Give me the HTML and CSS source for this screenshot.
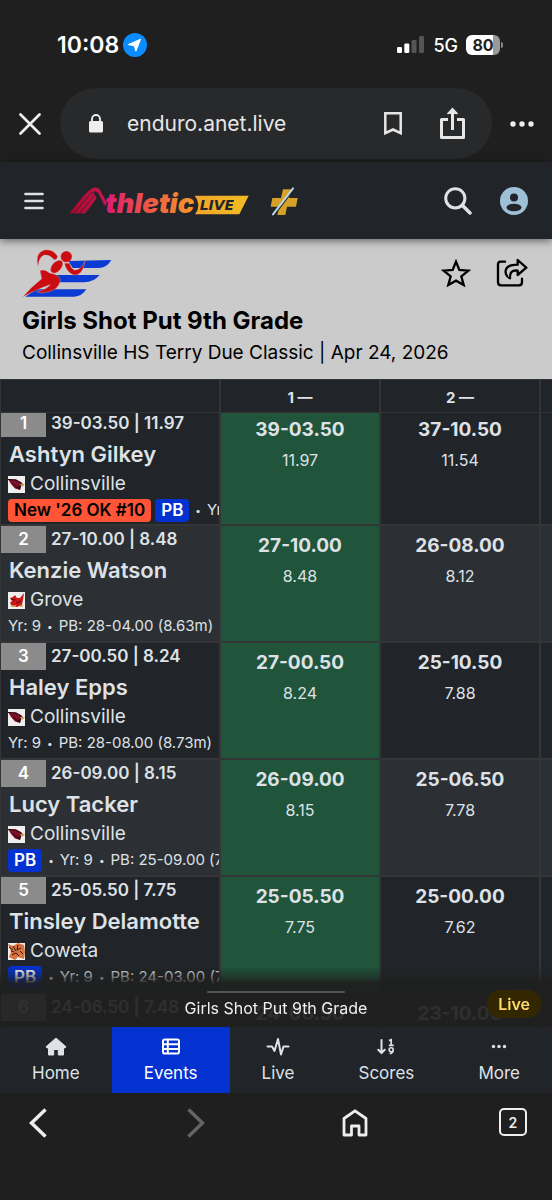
FILE: index.html
```html
<!DOCTYPE html>
<html lang="en">
<head>
<meta charset="utf-8">
<meta name="viewport" content="width=device-width, initial-scale=1">
<title>Girls Shot Put 9th Grade</title>
<link rel="stylesheet" href="styles.css">
</head>
<body>
<svg class="defs" aria-hidden="true">
  <symbol id="cardinal" viewBox="0 0 17 17">
    <rect width="17" height="17" fill="#f1eeee"/>
    <path d="M0 3 L8 3.500 L13 6 L16 9 L13 10 L12 14 L7 12.500 L3 8 Z" fill="#7d1029"/>
    <path d="M0 3.500 L8 4 L13 7 M5 8 L11 13" stroke="#25070d" stroke-width="1" fill="none"/>
    <path d="M12 8 L17 8 L14 11 Z" fill="#c9a14a"/>
    <path d="M9 11 L13 10 L12 14 Z" fill="#26090f"/>
  </symbol>
  <symbol id="redbird" viewBox="0 0 17 17">
    <rect width="17" height="17" fill="#f1eeee"/>
    <path d="M2 6 L5 5 L7 3 L9 6 L12 6 L16 1 L15 8 L14 13 L9 15 L4 14 L2 11 L4 9 Z" fill="#c81818"/>
    <path d="M3 7 L7 8 M8 11 L13 9" stroke="#5e0808" fill="none"/>
    <path d="M3 14 H8 M12 14 H15" stroke="#c9a14a" stroke-width="1.5"/>
  </symbol>
  <symbol id="tiger" viewBox="0 0 17 17">
    <rect width="17" height="17" fill="#f1eeee"/>
    <path d="M0 1 L5 3 L10 0 L16 2 L17 9 L16 16 L10 14 L7 17 L1 14 L3 9 Z" fill="#d9723c"/>
    <path d="M1 4 L5 7 M5 3 L8 8 M10 2 L9 7 L13 5 M4 12 L8 10 L11 13 M12 8 L15 11 M6 9 L3 8" stroke="#2b1712" stroke-width="1" fill="none"/>
  </symbol>
</svg>

<div class="status-bar">
  <div class="status-group">
    <span class="clock">10:08</span>
    <svg width="24" height="24" viewBox="0 0 24 24" aria-hidden="true"><circle cx="12" cy="12" r="12" fill="#0a8cff"/><path d="M17.6 6.2 L12.9 18.2 L11.3 12.7 L5.2 11.6 Z" fill="#fff" stroke="#fff" stroke-width="1" stroke-linejoin="round"/></svg>
  </div>
  <div class="status-group status-right">
    <svg width="28" height="18" viewBox="0 0 28 18" aria-hidden="true"><rect x="0" y="11" width="5" height="6" rx="1.3" fill="#fff"/><rect x="7.3" y="7.500" width="5" height="9.500" rx="1.3" fill="#fff"/><rect x="14.6" y="4" width="5" height="13" rx="1.3" fill="#555"/><rect x="22" y="0" width="5" height="17" rx="1.3" fill="#555"/></svg>
    <span class="network">5G</span>
    <span class="battery">80</span>
  </div>
</div>

<div class="browser-bar">
  <button class="icon-button side" aria-label="Close"><svg width="22" height="22" viewBox="0 0 22 22"><path d="M1.500 1.500 L20.500 20.500 M20.500 1.500 L1.500 20.500" stroke="#eee" stroke-width="2.700" stroke-linecap="round"/></svg></button>
  <div class="address">
    <svg width="14" height="19" viewBox="0 0 14 19" aria-hidden="true"><rect y="7" width="14" height="11.500" rx="1.500" fill="#eee"/><path d="M3 8 V5 A4 4 0 0 1 11 5 V8" fill="none" stroke="#eee" stroke-width="1.8"/></svg>
    <span class="url">enduro.anet.live</span>
    <button class="icon-button" aria-label="Bookmark"><svg width="18" height="23" viewBox="0 0 18 23"><path d="M1.300 1.300 H16.700 V21.200 L9 17.500 L1.300 21.200 Z" fill="none" stroke="#e6e6e6" stroke-width="2.500"/></svg></button>
    <button class="icon-button share" aria-label="Share"><svg width="25" height="33" viewBox="0 0 25 33"><path d="M8 12.500 H1.500 V30.500 H23.500 V12.500 H17 M12.500 23 V3" fill="none" stroke="#e6e6e6" stroke-width="3" stroke-linejoin="round"/><path d="M7.500 7 L12.500 1.500 L17.500 7" fill="#e6e6e6" stroke="#e6e6e6" stroke-width="1.500"/></svg></button>
  </div>
  <button class="icon-button side" aria-label="Menu"><svg width="24" height="6" viewBox="0 0 24 6"><g fill="#eee"><circle cx="3" cy="3" r="2.700"/><circle cx="12" cy="3" r="2.700"/><circle cx="21" cy="3" r="2.700"/></g></svg></button>
</div>

<header class="site-header">
  <button class="icon-button" aria-label="Open navigation"><svg width="20" height="18" viewBox="0 0 20 18"><path d="M1.500 2 H18.500 M1.500 9 H18.500 M1.500 16 H18.500" stroke="#dee2e6" stroke-width="2.700" stroke-linecap="round"/></svg></button>
  <a class="logo" href="#home" aria-label="Athletic Live">
    <svg width="182" height="30" viewBox="204 47 546 90">
      <defs>
        <linearGradient id="word" gradientUnits="userSpaceOnUse" x1="320" x2="585" y1="0" y2="0"><stop offset="0" stop-color="#dd1b70"/><stop offset=".5" stop-color="#ee5a45"/><stop offset="1" stop-color="#f49b28"/></linearGradient>
        <linearGradient id="mark" gradientUnits="userSpaceOnUse" x1="210" x2="320" y1="0" y2="0"><stop offset="0" stop-color="#a3092d"/><stop offset="1" stop-color="#cb1650"/></linearGradient>
        <linearGradient id="flag" gradientUnits="userSpaceOnUse" x1="585" x2="745" y1="0" y2="0"><stop offset="0" stop-color="#f0a52c"/><stop offset="1" stop-color="#f2bc22"/></linearGradient>
      </defs>
      <path d="M209 129 Q246 78 270 58 Q287 46 299 57 L321 98 L313 108 L294 69 Q286 61 276 70 L256 129 Z" fill="url(#mark)"/>
      <path d="M256 129 L290 84 L280 66 L226 129 Z" fill="url(#mark)"/>
      <path d="M260 129 L291 84 L312 110 L330 129 Z" fill="#212529"/>
      <path d="M222 129 L272 70 Q286 58 294 70 L315 107 M239 129 L284 75" fill="none" stroke="#212529" stroke-width="2"/>
      <text class="logo-word" x="316" y="128" fill="url(#word)">thletic</text>
      <path d="M584 76 H746 L718 132 H585 Q606 104 584 76 Z" fill="url(#flag)"/>
      <text class="logo-live" x="599" y="120">LIVE</text>
    </svg>
  </a>
  <button class="icon-button plus" aria-label="Plus"><svg width="30" height="30" viewBox="807 50 90 90"><path d="M849 60 H873 L867 86 H893 L888 112 H861 L856 137 H832 L838 112 H812 L817 86 H843 Z" fill="#d6a126"/><path d="M881 60 L824 135" stroke="#212529" stroke-width="5"/><path d="M879 57 L819 135" stroke="#b9d7ea" stroke-width="6" stroke-linecap="round"/></svg></button>
  <button class="icon-button search" aria-label="Search"><svg width="28" height="28" viewBox="0 0 28 28"><circle cx="11.300" cy="11.300" r="9.600" fill="none" stroke="#dee2e6" stroke-width="3"/><path d="M18.500 18.500 L26 26" stroke="#dee2e6" stroke-width="3.500" stroke-linecap="round"/></svg></button>
  <button class="icon-button" aria-label="Account"><svg width="28" height="28" viewBox="0 0 28 28"><circle cx="14" cy="14" r="14" fill="#9ec0d6"/><circle cx="14" cy="10.500" r="4" fill="#212529"/><ellipse cx="14" cy="20.500" rx="7.500" ry="3.800" fill="#212529"/></svg></button>
</header>

<section class="event">
  <div class="event-top">
    <svg width="90" height="48" viewBox="66 27 270 144" role="img" aria-label="Meet logo">
      <g fill="#0b3bd3"><path d="M205 63 L334 60 Q320 84 296 84 L218 84 Z"/><path d="M160 105 H299 Q281 127 252 127 H178 Z"/><path d="M108 148 H259 Q246 169 222 170 H76 Z"/></g>
      <g fill="#cb0d12" stroke="#cbcbcb" stroke-width="1"><circle cx="199" cy="50" r="17"/><ellipse cx="170" cy="80" rx="23" ry="14" transform="rotate(-48 170 80)"/><path d="M114 80 Q104 38 133 30 Q159 26 173 49 Q171 61 162 59 Q150 43 133 45 Q117 50 114 80 Z"/><path d="M193 70 Q199 97 222 106 Q251 103 255 62 Q243 91 223 90 Q213 85 209 70 Z"/><path d="M120 92 Q132 85 149 99 Q178 103 181 121 Q176 156 124 159 L110 155 Q138 149 151 134 Q115 145 68 171 Q92 142 125 116 Z"/></g>
    </svg>
    <button class="icon-button star" aria-label="Favorite"><svg width="30" height="28" viewBox="366 268 88 84"><path d="M410 276 L420 301 L447 303 L426 320 L433 346 L410 333 L387 346 L394 320 L373 303 L400 301 Z" fill="none" stroke="#000" stroke-width="7"/></svg></button>
    <button class="icon-button" aria-label="Share event"><svg width="32" height="30" viewBox="529 265 96 90"><path d="M556 276 H543 Q535 276 535 284 V338 Q535 347 544 347 H598 Q607 347 607 338 V327" fill="none" stroke="#000" stroke-width="7" stroke-linecap="round"/><path d="M594 271 L620 294 L594 316 V303 Q569 299 571 326 Q556 318 558 303 Q561 285 594 285 Z" fill="none" stroke="#000" stroke-width="7" stroke-linejoin="round"/></svg></button>
  </div>
  <h1>Girls Shot Put 9th Grade</h1>
  <p>Collinsville HS Terry Due Classic | Apr 24, 2026</p>
</section>

<main class="board">
  <table class="results">
    <colgroup><col class="col-athlete"><col class="col-attempt"><col class="col-attempt"><col class="col-attempt"></colgroup>
    <thead><tr><th aria-label="Athlete"></th><th>1 —</th><th>2 —</th><th></th></tr></thead>
    <tbody>
      <tr>
        <td><div class="athlete"><div class="summary"><span class="rank">1</span>39-03.50 | 11.97</div><div class="name">Ashtyn Gilkey</div><div class="team"><svg width="17" height="17"><use href="#cardinal"/></svg>Collinsville</div><div class="meta"><span class="badge record">New '26 OK #10</span><span class="badge">PB</span><span class="dot">•</span>Yr: 9<span class="dot">•</span>PB: 39-03.50 (11.97m)</div></div></td>
        <td class="best"><div class="mark"><b>39-03.50</b><span>11.97</span></div></td><td><div class="mark"><b>37-10.50</b><span>11.54</span></div></td><td></td>
      </tr>
      <tr>
        <td><div class="athlete"><div class="summary"><span class="rank">2</span>27-10.00 | 8.48</div><div class="name">Kenzie Watson</div><div class="team"><svg width="17" height="17"><use href="#redbird"/></svg>Grove</div><div class="meta">Yr: 9<span class="dot">•</span>PB: 28-04.00 (8.63m)</div></div></td>
        <td class="best"><div class="mark"><b>27-10.00</b><span>8.48</span></div></td><td><div class="mark"><b>26-08.00</b><span>8.12</span></div></td><td></td>
      </tr>
      <tr>
        <td><div class="athlete"><div class="summary"><span class="rank">3</span>27-00.50 | 8.24</div><div class="name">Haley Epps</div><div class="team"><svg width="17" height="17"><use href="#cardinal"/></svg>Collinsville</div><div class="meta">Yr: 9<span class="dot">•</span>PB: 28-08.00 (8.73m)</div></div></td>
        <td class="best"><div class="mark"><b>27-00.50</b><span>8.24</span></div></td><td><div class="mark"><b>25-10.50</b><span>7.88</span></div></td><td></td>
      </tr>
      <tr>
        <td><div class="athlete"><div class="summary"><span class="rank">4</span>26-09.00 | 8.15</div><div class="name">Lucy Tacker</div><div class="team"><svg width="17" height="17"><use href="#cardinal"/></svg>Collinsville</div><div class="meta"><span class="badge">PB</span><span class="dot">•</span>Yr: 9<span class="dot">•</span>PB: 25-09.00 (7.84m)</div></div></td>
        <td class="best"><div class="mark"><b>26-09.00</b><span>8.15</span></div></td><td><div class="mark"><b>25-06.50</b><span>7.78</span></div></td><td></td>
      </tr>
      <tr>
        <td><div class="athlete"><div class="summary"><span class="rank">5</span>25-05.50 | 7.75</div><div class="name">Tinsley Delamotte</div><div class="team"><svg width="17" height="17"><use href="#tiger"/></svg>Coweta</div><div class="meta"><span class="badge">PB</span><span class="dot">•</span>Yr: 9<span class="dot">•</span>PB: 24-03.00 (7.39m)</div></div></td>
        <td class="best"><div class="mark"><b>25-05.50</b><span>7.75</span></div></td><td><div class="mark"><b>25-00.00</b><span>7.62</span></div></td><td></td>
      </tr>
      <tr>
        <td><div class="athlete"><div class="summary"><span class="rank">6</span>24-06.50 | 7.48</div></div></td>
        <td><div class="mark"><b>24-06.50</b></div></td><td><div class="mark"><b>23-10.00</b></div></td><td></td>
      </tr>
    </tbody>
  </table>
  <div class="sheet">
    <span class="handle"></span>
    <span class="sheet-title">Girls Shot Put 9th Grade</span>
    <button class="live">Live</button>
  </div>
</main>

<nav class="tabs">
  <a href="#home"><svg width="22" height="20" viewBox="0 0 22 20"><path d="M11 1 L21 9.800 L19.800 11 H18.500 V18 H13.300 V12.500 H8.700 V18 H3.500 V11 H2.200 L1 9.800 Z" fill="#dee2e6" stroke="#dee2e6" stroke-linejoin="round"/></svg>Home</a>
  <a href="#events" class="active"><svg width="20" height="20" viewBox="0 0 20 20"><rect x="2" y="2.500" width="16" height="14" rx="1.800" fill="none" stroke="#fff" stroke-width="2"/><path d="M2 7.200 H18 M2 12 H18 M6.800 3 V16" stroke="#fff" stroke-width="2"/></svg>Events</a>
  <a href="#live"><svg width="24" height="20" viewBox="0 0 24 20"><path d="M1.500 9.500 H6 L8.500 14 L12 2 L15 17.500 L17.500 9.500 H22.500" fill="none" stroke="#dee2e6" stroke-width="2" stroke-linejoin="round" stroke-linecap="round"/></svg>Live</a>
  <a href="#scores"><svg width="18" height="20" viewBox="0 0 18 20"><path d="M4.500 3 V16 M1.300 12.800 L4.500 16 L7.700 12.800" fill="none" stroke="#dee2e6" stroke-width="2" stroke-linecap="round"/><path d="M12 3.600 L14.200 2.800 V8 M11.800 8.300 H16.800 M16 13.500 Q16 16 12.800 16.800" fill="none" stroke="#dee2e6" stroke-width="1.700"/><circle cx="14.200" cy="12.800" r="2" fill="none" stroke="#dee2e6" stroke-width="1.600"/></svg>Scores</a>
  <a href="#more"><svg width="16" height="20" viewBox="0 0 16 20"><g fill="#dee2e6"><circle cx="2.500" cy="9.500" r="1.700"/><circle cx="8" cy="9.500" r="1.700"/><circle cx="13.500" cy="9.500" r="1.700"/></g></svg>More</a>
</nav>

<footer class="browser-tools">
  <button class="icon-button" aria-label="Back"><svg width="18" height="30" viewBox="0 0 18 30"><path d="M16.500 1.500 L2.500 15 L16.500 28.500" fill="none" stroke="#eee" stroke-width="3.500"/></svg></button>
  <button class="icon-button" aria-label="Forward"><svg width="18" height="30" viewBox="0 0 18 30"><path d="M1.500 1.500 L15.500 15 L1.500 28.500" fill="none" stroke="#656565" stroke-width="3.500"/></svg></button>
  <button class="icon-button" aria-label="Home page"><svg width="26" height="28" viewBox="0 0 26 28"><path d="M2 26 V9.500 L13 1.800 L24 9.500 V26 H17 V17 H9.500 V26 Z" fill="none" stroke="#eee" stroke-width="2.800" stroke-linejoin="round"/></svg></button>
  <button class="tab-count" aria-label="2 open tabs">2</button>
</footer>
</body>
</html>
```
FILE: styles.css
```css
* { box-sizing: border-box; }

body {
  margin: 0;
  height: 100vh;
  display: flex;
  flex-direction: column;
  overflow: hidden;
  background: #1f1f1f;
  color: #dee2e6;
  font-family: Inter, "Liberation Sans", sans-serif;
}

svg { display: block; flex: none; }
a { color: inherit; text-decoration: none; }

button {
  border: 0;
  padding: 0;
  background: none;
  color: inherit;
  font: inherit;
  cursor: pointer;
}

.defs { position: absolute; width: 0; height: 0; }
.icon-button { display: flex; align-items: center; justify-content: center; flex: none; }

/* Phone status bar */
.status-bar {
  height: 88px;
  flex: none;
  display: flex;
  align-items: center;
  justify-content: space-between;
  padding: 2px 52px 0 57px;
  color: #fff;
}
.status-group { display: flex; align-items: center; gap: 4px; }
.status-right { gap: 8px; }
.clock { font-size: 23px; font-weight: 600; }
.network { font-size: 18px; font-weight: 500; }
.battery {
  position: relative;
  width: 34px;
  height: 20px;
  border-radius: 6px;
  background: linear-gradient(90deg, #fff 80%, #999 80%);
  color: #1f1f1f;
  font-size: 16px;
  font-weight: 700;
  line-height: 20px;
  text-align: center;
}
.battery::after {
  content: "";
  position: absolute;
  right: -3px;
  top: 7px;
  width: 2px;
  height: 6px;
  border-radius: 0 2px 2px 0;
  background: #888;
}

/* Browser address bar */
.browser-bar { flex: none; display: flex; padding-bottom: 3px; }
.side { width: 60px; }
.address {
  flex: 1;
  height: 71px;
  display: flex;
  align-items: center;
  padding: 0 27px 0 29px;
  border-radius: 36px;
  background: #28292a;
}
.url { flex: 1; margin-left: 24px; font-size: 21px; color: #e6e6e6; }
.share { margin-left: 38px; }

/* Site header */
.site-header {
  position: relative;
  z-index: 2;
  flex: none;
  height: 77px;
  display: flex;
  align-items: center;
  padding: 0 24px;
  background: #212529;
  box-shadow: 0 2px 8px rgba(0, 0, 0, .5);
}
.logo { margin-left: 24px; }
.logo-word { font: italic 900 82px Inter, sans-serif; }
.logo-live { font: italic 700 42px "DejaVu Sans", sans-serif; fill: #212529; }
.plus { margin-left: 19px; }
.search { margin: 0 28px 0 auto; }

/* Event heading */
.event { flex: none; padding: 10px 24px 10px 22px; background: #cbcbcb; color: #000; }
.event-top { display: flex; align-items: center; margin-bottom: 8px; }
.star { margin: 0 25px 0 auto; }
.event h1 { margin: 0; font-size: 24px; font-weight: 700; line-height: 32px; }
.event p { margin: 0; font-size: 19px; line-height: 32px; white-space: nowrap; }

/* Results */
.board { position: relative; flex: 1; min-height: 0; overflow: hidden; background: #212529; }
.results { width: 701px; table-layout: fixed; border-collapse: separate; border-spacing: 0; }
.col-athlete { width: 221px; }
.col-attempt { width: 160px; }
.results th {
  position: sticky;
  top: 0;
  z-index: 1;
  height: 34px;
  padding: 3px 0 0;
  border-right: 2px solid #323436;
  border-bottom: 1px solid #323436;
  border-top: 1px solid #323436;
  background: #212529;
  font-size: 15px;
  font-weight: 700;
}
.results td {
  height: 117px;
  padding: 0;
  border-right: 2px solid #343536;
  border-bottom: 2px solid #343536;
  vertical-align: top;
}
.results td:first-child, .results th:first-child { border-left: 1px solid #323436; }
.results tr:nth-child(even) td { background: #2c3034; }
.results tbody tr:first-child td { height: 113px; }
.results tbody tr:first-child td > div { margin-top: -3px; }
.results tr .best, .results tr:nth-child(even) .best { background: #20543b; }

.athlete { overflow: hidden; white-space: nowrap; }
.summary { display: flex; gap: 5px; font-size: 17px; font-weight: 600; line-height: 27px; }
.rank { width: 45px; background: #8b8b8b; color: #fff; text-align: center; }
.name { padding-left: 8px; font-size: 22px; font-weight: 600; line-height: 35px; }
.team { display: flex; align-items: center; gap: 5px; padding-left: 7px; font-size: 19px; line-height: 24px; }
.meta { display: flex; align-items: center; gap: 4px; padding-left: 7px; font-size: 15px; line-height: 28px; }
.dot { margin: 0 2px; font-size: 10px; }
.badge {
  padding: 0 6px;
  border-radius: 4px;
  background: #0432d0;
  color: #fff;
  font-size: 17px;
  font-weight: 600;
  line-height: 23px;
}
.record { background: #ff5436; color: #000; }

.mark { display: flex; flex-direction: column; padding-top: 5px; text-align: center; line-height: 30px; }
.mark b { font-size: 19px; font-weight: 700; }
.mark span { font-size: 16px; }

/* Collapsed sheet over the results */
.sheet {
  position: absolute;
  z-index: 2;
  inset: auto 0 0;
  height: 60px;
  display: flex;
  flex-direction: column;
  align-items: center;
  padding-top: 24px;
  background: linear-gradient(rgba(31, 31, 31, 0), rgba(31, 31, 31, .5) 10px, rgba(31, 31, 31, .92) 16px);
}
.handle { width: 138px; height: 2px; border-radius: 2px; background: #555; }
.sheet-title { margin-top: 3px; color: #f0f0f0; font-size: 16px; line-height: 24px; }
.live {
  position: absolute;
  right: 11px;
  bottom: 9px;
  padding: 0 11px;
  border-radius: 14px;
  background: #332701;
  color: #ffda6a;
  font-size: 16px;
  font-weight: 600;
  line-height: 28px;
}

/* Bottom navigation */
.tabs { flex: none; display: flex; height: 66px; background: #212529; }
.tabs a {
  flex: 1 1 auto;
  display: flex;
  flex-direction: column;
  align-items: center;
  padding-top: 10px;
  font-size: 17px;
  line-height: 32px;
}
.tabs .active { background: #0432d0; color: #fff; }

.browser-tools {
  flex: none;
  height: 107px;
  display: flex;
  align-items: flex-start;
  justify-content: space-between;
  padding: 15px 25px 0 24px;
}
.browser-tools .icon-button { width: 28px; height: 30px; }
.tab-count {
  width: 28px;
  height: 28px;
  border: 2px solid #eee;
  border-radius: 5px;
  color: #eee;
  font-size: 14px;
  font-weight: 600;
}
```
